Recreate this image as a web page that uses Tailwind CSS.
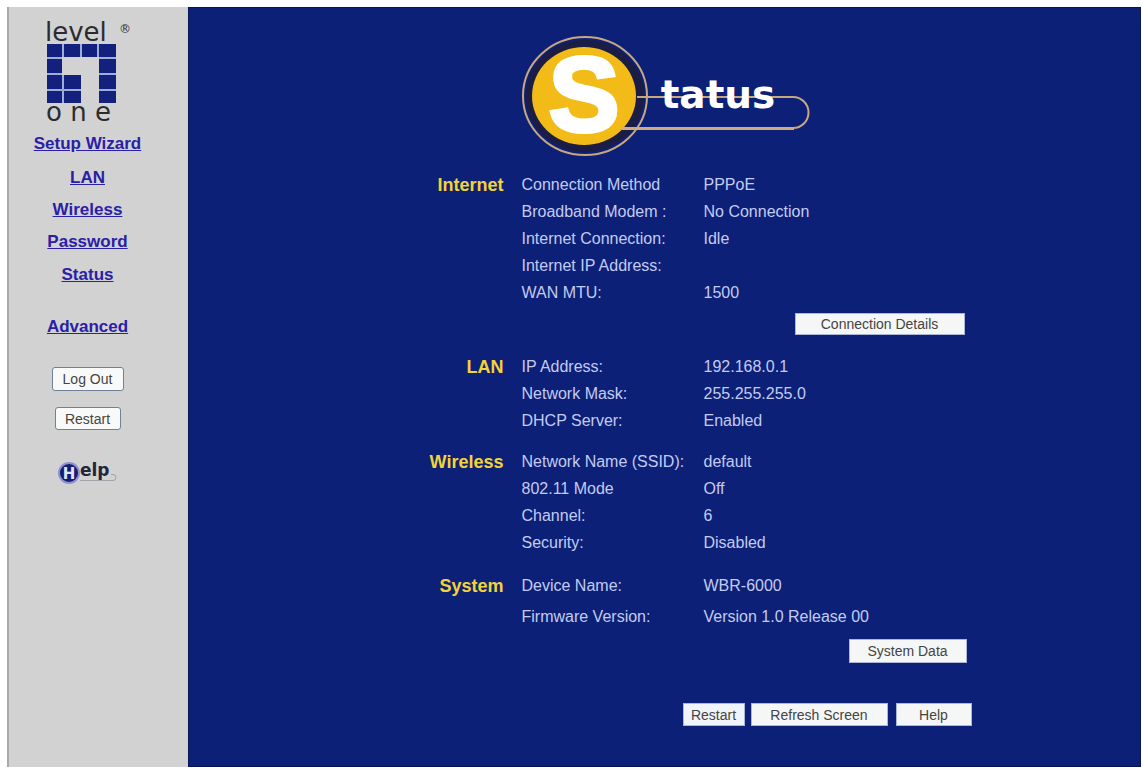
<!DOCTYPE html>
<html lang="en">
<head>
<meta charset="utf-8">
<title>Status</title>
<script src="https://cdn.jsdelivr.net/npm/@tailwindcss/browser@4"></script>
</head>
<body class="flex min-h-screen bg-white pt-[7px] pr-[2px] pb-[4px] pl-[7px] font-['Liberation_Sans',Arial,sans-serif]">
<aside class="flex w-[181px] shrink-0 flex-col items-center border-l-2 border-[#a9a9a9] bg-[#d2d2d2] pt-2 pr-[22px]">
  <svg class="h-[114px] w-[88px]" viewBox="44 15 88 114" role="img" aria-label="level one" font-family="DejaVu Sans, sans-serif" fill="#2c2c30">
    <text x="45" y="41" font-size="26">level</text>
    <text x="119" y="33" font-size="12">®</text>
    <g fill="#14207e">
      <rect x="47" y="44" width="15" height="13"/><rect x="64" y="44" width="16" height="13"/><rect x="82" y="44" width="15" height="13"/><rect x="99" y="44" width="17" height="13"/>
      <rect x="47" y="59" width="15" height="14"/><rect x="99" y="59" width="17" height="14"/>
      <rect x="47" y="75" width="15" height="14"/><rect x="64" y="75" width="17" height="14"/><rect x="99" y="75" width="17" height="14"/>
      <rect x="47" y="91" width="15" height="12"/><rect x="64" y="91" width="17" height="12"/><rect x="99" y="91" width="17" height="12"/>
    </g>
    <g stroke="#8fa3dc" stroke-width="1.500" fill="none">
      <path d="M63 44V57M63 75V103M81 44V57M98 44V57M47 58H62M99 58H116M47 74H62M99 74H116M47 90H81M99 90H116"/>
    </g>
    <text x="46" y="121" font-size="26">o n e</text>
  </svg>
  <nav class="-mt-px flex flex-col items-center text-[17px] leading-8 font-bold text-[#2a20a8]">
    <a class="underline" href="#">Setup Wizard</a>
    <a class="mt-[2px] underline" href="#">LAN</a>
    <a class="underline" href="#">Wireless</a>
    <a class="underline" href="#">Password</a>
    <a class="mt-px underline" href="#">Status</a>
    <a class="mt-5 underline" href="#">Advanced</a>
  </nav>
  <button class="mt-6 h-6 w-[72px] rounded-[3px] border border-[#6f8098] bg-[#f8fafa] text-sm leading-none text-[#444]">Log Out</button>
  <button class="mt-4 h-[23px] w-[66px] rounded-[3px] border border-[#6f8098] bg-[#f8fafa] text-sm leading-none text-[#444]">Restart</button>
  <a href="#" class="mt-[31px]" aria-label="Help">
    <svg class="h-6 w-[60px]" viewBox="0 0 60 24">
      <circle cx="11" cy="12" r="11" fill="#8d92cc"/><circle cx="11" cy="12" r="9" fill="#141c74"/>
      <text x="11" y="18" text-anchor="middle" font-family="DejaVu Sans, sans-serif" font-weight="bold" font-size="15" fill="#e4e6f8">H</text>
      <text x="22" y="15" font-family="DejaVu Sans, sans-serif" font-weight="bold" font-size="17" fill="#25253a">elp</text>
      <path d="M22 19.500H55a2.500 2.500 0 0 0 0-6H53" fill="none" stroke="#a2a2a8"/>
    </svg>
  </a>
</aside>
<main class="flex-1 border border-[#071556] bg-[#0d2077] pt-[27px]">
  <div class="mx-auto flex w-[614px] flex-col text-[#c3cbf2]">
    <h1 class="pl-[162px]">
      <svg class="h-[123px] w-[292px]" viewBox="520 35 292 123" role="img" aria-label="Status" font-weight="bold">
        <ellipse cx="585" cy="96" rx="62" ry="59" fill="#0d2077"/>
        <ellipse cx="585" cy="96" rx="59" ry="56" fill="#1c1d45"/>
        <ellipse cx="585" cy="96" rx="62" ry="59" fill="none" stroke="#c9a77c" stroke-width="2"/>
        <ellipse cx="584" cy="96" rx="52" ry="49" fill="#f2bb18"/>
        <path d="M637 97H793a15.500 15.500 0 0 1 0 31" fill="none" stroke="#c9a77c" stroke-width="2"/>
        <path d="M622 128.500H794" fill="none" stroke="#d0ab80" stroke-width="3"/>
        <text x="584" y="131" text-anchor="middle" font-family="Liberation Sans, sans-serif" font-size="106" fill="#fff" stroke="#fff" stroke-width="4">S</text>
        <text x="718" y="108" text-anchor="middle" font-family="DejaVu Sans, sans-serif" font-size="39" fill="#fff">tatus</text>
      </svg>
    </h1>
    <table class="mt-[13px] w-full table-fixed border-collapse text-left [&_tr]:h-[27px] [&_td]:p-0 [&_td]:text-base [&_td]:leading-5 [&_th]:p-0 [&_th]:text-base [&_th]:leading-5 [&_th]:font-normal">
      <colgroup><col class="w-[164px]"><col class="w-[182px]"><col></colgroup>
      <tbody>
        <tr><td><h2 class="pr-[18px] text-right text-lg leading-5 font-bold text-[#f3d337]">Internet</h2></td><th scope="row">Connection Method</th><td>PPPoE</td></tr>
        <tr><td></td><th scope="row">Broadband Modem :</th><td>No Connection</td></tr>
        <tr><td></td><th scope="row">Internet Connection:</th><td>Idle</td></tr>
        <tr><td></td><th scope="row">Internet IP Address:</th><td></td></tr>
        <tr><td></td><th scope="row">WAN MTU:</th><td>1500</td></tr>
      </tbody>
    </table>
    <button class="mt-[7px] mr-[7px] h-[22px] w-[170px] self-end border border-[#a9b6d8] bg-[#f5f7f7] text-sm leading-none text-[#444]">Connection Details</button>
    <table class="mt-[18px] w-full table-fixed border-collapse text-left [&_tr]:h-[27px] [&_td]:p-0 [&_td]:text-base [&_td]:leading-5 [&_th]:p-0 [&_th]:text-base [&_th]:leading-5 [&_th]:font-normal">
      <colgroup><col class="w-[164px]"><col class="w-[182px]"><col></colgroup>
      <tbody>
        <tr><td><h2 class="pr-[18px] text-right text-lg leading-5 font-bold text-[#f3d337]">LAN</h2></td><th scope="row">IP Address:</th><td>192.168.0.1</td></tr>
        <tr><td></td><th scope="row">Network Mask:</th><td>255.255.255.0</td></tr>
        <tr><td></td><th scope="row">DHCP Server:</th><td>Enabled</td></tr>
      </tbody>
    </table>
    <table class="mt-[14px] w-full table-fixed border-collapse text-left [&_tr]:h-[27px] [&_td]:p-0 [&_td]:text-base [&_td]:leading-5 [&_th]:p-0 [&_th]:text-base [&_th]:leading-5 [&_th]:font-normal">
      <colgroup><col class="w-[164px]"><col class="w-[182px]"><col></colgroup>
      <tbody>
        <tr><td><h2 class="pr-[18px] text-right text-lg leading-5 font-bold text-[#f3d337]">Wireless</h2></td><th scope="row">Network Name (SSID):</th><td>default</td></tr>
        <tr><td></td><th scope="row">802.11 Mode</th><td>Off</td></tr>
        <tr><td></td><th scope="row">Channel:</th><td>6</td></tr>
        <tr><td></td><th scope="row">Security:</th><td>Disabled</td></tr>
      </tbody>
    </table>
    <table class="mt-[14px] w-full table-fixed border-collapse text-left [&_tr]:h-[31px] [&_td]:p-0 [&_td]:text-base [&_td]:leading-5 [&_th]:p-0 [&_th]:text-base [&_th]:leading-5 [&_th]:font-normal">
      <colgroup><col class="w-[164px]"><col class="w-[182px]"><col></colgroup>
      <tbody>
        <tr><td><h2 class="pr-[18px] text-right text-lg leading-5 font-bold text-[#f3d337]">System</h2></td><th scope="row">Device Name:</th><td>WBR-6000</td></tr>
        <tr><td></td><th scope="row">Firmware Version:</th><td>Version 1.0 Release 00</td></tr>
      </tbody>
    </table>
    <button class="mt-[7px] mr-[5px] h-6 w-[118px] self-end border border-[#a9b6d8] bg-[#f5f7f7] text-sm leading-none text-[#444]">System Data</button>
    <div class="mt-10 flex justify-end">
      <button class="h-[23px] w-[62px] border border-[#a9b6d8] bg-[#f0f5fb] text-sm leading-none text-[#444]">Restart</button>
      <button class="ml-[6px] h-[23px] w-[137px] border border-[#a9b6d8] bg-[#f5f7f7] text-sm leading-none text-[#444]">Refresh Screen</button>
      <button class="ml-2 h-[23px] w-[76px] border border-[#a9b6d8] bg-[#f5f7f7] text-sm leading-none text-[#444]">Help</button>
    </div>
  </div>
</main>
</body>
</html>
